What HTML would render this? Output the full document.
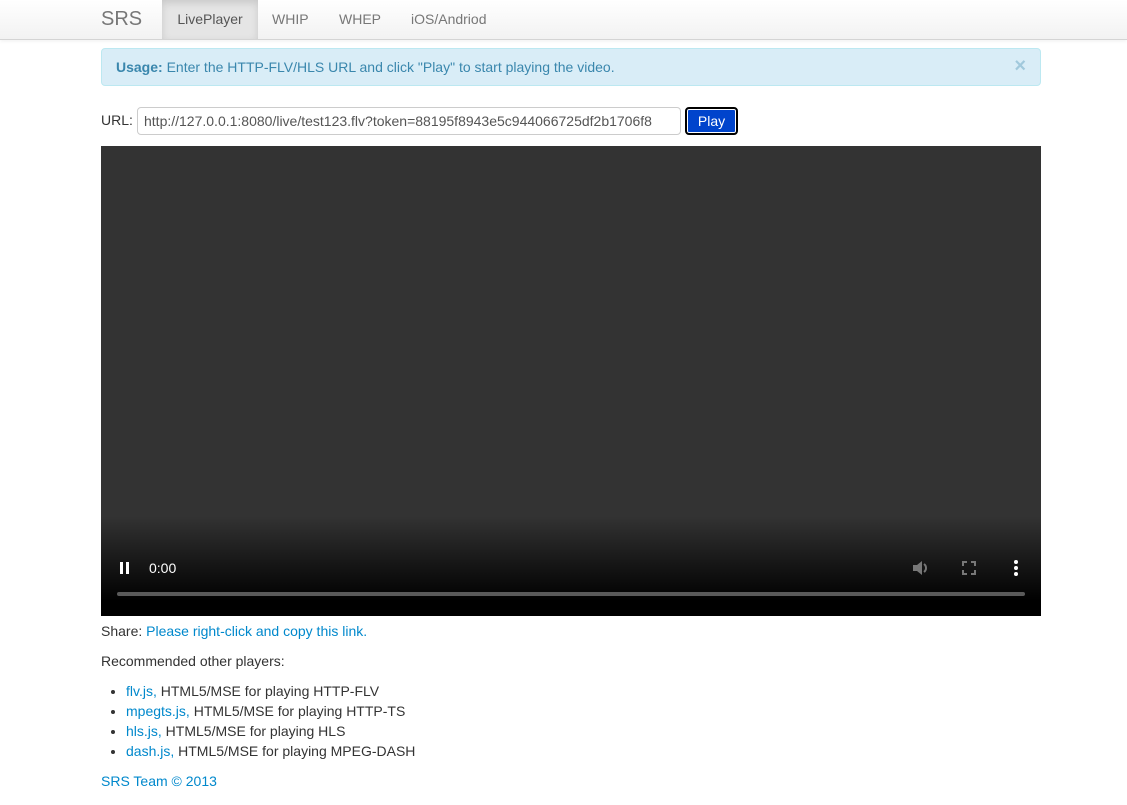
<!DOCTYPE html>
<html><head><meta charset="utf-8"><style>
*{box-sizing:border-box}
body{margin:0;width:1127px;height:805px;overflow:hidden;background:#fff;font-family:"Liberation Sans",Arial,sans-serif;font-size:14px;color:#333}
a{color:#0088cc;text-decoration:none}
.nav{position:absolute;left:0;top:0;width:1127px;height:40px;background:linear-gradient(#fff,#f2f2f2);border-bottom:1px solid #d4d4d4;box-shadow:0 1px 4px rgba(0,0,0,.065)}
.nav .brand{position:absolute;left:101px;top:8px;font-size:20px;color:#777}
.nav .it{position:absolute;top:0;height:39px;line-height:38px;font-size:14px;color:#777}
.nav .act{background:#e5e5e5;box-shadow:inset 0 3px 8px rgba(0,0,0,.125);color:#555}
.alert{position:absolute;left:101px;top:48px;width:940px;height:38px;background:#d9edf7;border:1px solid #bce8f1;border-radius:4px;color:#3a87ad;padding:10px 14px;font-size:14px}
.alert .x{position:absolute;right:14px;top:6px;font-size:20px;color:#3a87ad;opacity:.35;font-weight:bold}
.url{position:absolute;left:101px;top:112px}
.inp{position:absolute;left:137px;top:107px;width:544px;height:28px;border:1px solid #ccc;border-radius:4px;padding:4px 6px;font-size:14px;color:#555;line-height:18px}
.btn{position:absolute;left:685px;top:107px;width:53px;height:28px;border:2px solid #000;border-radius:4px;background:#0044cc;color:#fff;text-align:center;line-height:24px;font-size:14px;box-shadow:inset 0 0 0 1px #fff}
.vid{position:absolute;left:101px;top:146px;width:940px;height:470px;background:#333}
.grad{position:absolute;left:0;right:0;bottom:0;height:100px;background:linear-gradient(rgba(0,0,0,0),#000 85%)}
.bar{position:absolute;left:16px;right:16px;bottom:20px;height:4px;border-radius:2px;background:#5a5a5a}
.t{position:absolute;left:48px;top:414px;color:#fff;font-size:14px}
.p{position:absolute;top:623px;left:101px}
ul{position:absolute;left:101px;top:681px;margin:0;padding-left:25px;line-height:20px}
</style></head><body>
<div class="nav"><span class="brand">SRS</span>
<span class="it act" style="left:162px;width:96px;text-align:center">LivePlayer</span>
<span class="it" style="left:272px">WHIP</span>
<span class="it" style="left:339px">WHEP</span>
<span class="it" style="left:411px">iOS/Andriod</span></div>
<div class="alert"><b>Usage:</b> Enter the HTTP-FLV/HLS URL and click "Play" to start playing the video.<span class="x">×</span></div>
<span class="url">URL:</span>
<div class="inp">http://127.0.0.1:8080/live/test123.flv?token=88195f8943e5c944066725df2b1706f8</div>
<div class="btn">Play</div>
<div class="vid"><div class="grad"></div>
<svg style="position:absolute;left:18px;top:415px" width="12" height="14"><rect x="1" y="1" width="3" height="12" fill="#fff"/><rect x="7" y="1" width="3" height="12" fill="#fff"/></svg>
<span class="t">0:00</span>
<svg style="position:absolute;left:810px;top:413px" width="20" height="18" viewBox="0 0 20 18"><path d="M2 6h4l5-4v14l-5-4H2z" fill="#777"/><path d="M13 5a5 5 0 0 1 0 8" stroke="#777" stroke-width="2" fill="none"/></svg>
<svg style="position:absolute;left:860px;top:414px" width="16" height="16" viewBox="0 0 16 16" fill="none" stroke="#777" stroke-width="2"><path d="M2 6V2h4M10 2h4v4M14 10v4h-4M6 14H2v-4"/></svg>
<svg style="position:absolute;left:912px;top:413px" width="6" height="18"><circle cx="3" cy="3" r="2" fill="#fff"/><circle cx="3" cy="9" r="2" fill="#fff"/><circle cx="3" cy="15" r="2" fill="#fff"/></svg>
<div class="bar"></div></div>
<div class="p">Share: <a>Please right-click and copy this link.</a></div>
<div class="p" style="top:653px">Recommended other players:</div>
<ul><li><a>flv.js,</a> HTML5/MSE for playing HTTP-FLV</li><li><a>mpegts.js,</a> HTML5/MSE for playing HTTP-TS</li><li><a>hls.js,</a> HTML5/MSE for playing HLS</li><li><a>dash.js,</a> HTML5/MSE for playing MPEG-DASH</li></ul>
<div class="p" style="top:773px"><a>SRS Team © 2013</a></div>
</body></html>
